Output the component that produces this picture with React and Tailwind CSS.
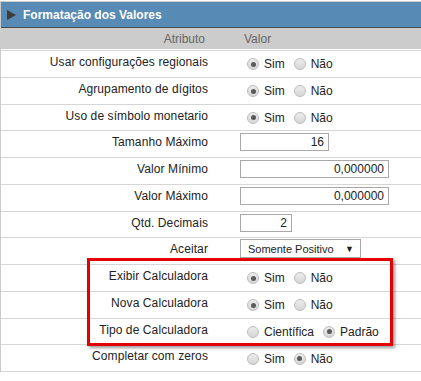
// App.jsx
// Formatação dos Valores – settings panel

const Radio = ({ checked }) => (
  <span className="inline-flex items-center justify-center w-[12px] h-[12px] rounded-full border border-[#bdbdbd] bg-[linear-gradient(#ececec,#d6d6d6)] shrink-0">
    {checked && <span className="w-[5px] h-[5px] rounded-full bg-[#5a5a5a]" />}
  </span>
);

const RadioGroup = ({ options, value }) => (
  <div className="flex items-center h-full pt-[1px]">
    {options.map((opt, i) => (
      <div key={opt} className={`flex items-center ${i === 0 ? 'ml-[7px]' : 'ml-[9px]'}`}>
        <Radio checked={opt === value} />
        <span className="ml-[5px] leading-[14px]">{opt}</span>
      </div>
    ))}
  </div>
);

const TextBox = ({ value, width }) => (
  <div className="pt-[2px]">
    <div
      className="h-[18px] border border-[#a9a9a9] bg-white flex items-center justify-end pr-[4px] leading-[14px]"
      style={{ width }}
    >
      {value}
    </div>
  </div>
);

const Select = () => (
  <div className="pt-[1px]">
    <div className="w-[121px] h-[19px] border border-[#a9a9a9] bg-white flex items-center justify-between pl-[7px] pr-[6px] text-[11px] leading-[14px]">
      <span>Somente Positivo</span>
      <span className="text-[9px]">▼</span>
    </div>
  </div>
);

const ROWS = [
  { label: 'Usar configurações regionais', el: <RadioGroup options={['Sim', 'Não']} value="Sim" /> },
  { label: 'Agrupamento de dígitos', el: <RadioGroup options={['Sim', 'Não']} value="Sim" /> },
  { label: 'Uso de símbolo monetario', el: <RadioGroup options={['Sim', 'Não']} value="Sim" /> },
  { label: 'Tamanho Máximo', el: <TextBox value="16" width={89} /> },
  { label: 'Valor Mínimo', el: <TextBox value="0,000000" width={149} /> },
  { label: 'Valor Máximo', el: <TextBox value="0,000000" width={149} /> },
  { label: 'Qtd. Decimais', el: <TextBox value="2" width={52} /> },
  { label: 'Aceitar', el: <Select /> },
  { label: 'Exibir Calculadora', el: <RadioGroup options={['Sim', 'Não']} value="Sim" /> },
  { label: 'Nova Calculadora', el: <RadioGroup options={['Sim', 'Não']} value="Sim" /> },
  { label: 'Tipo de Calculadora', el: <RadioGroup options={['Científica', 'Padrão']} value="Padrão" /> },
  { label: 'Completar com zeros', el: <RadioGroup options={['Sim', 'Não']} value="Não" /> },
];

export default function App() {
  return (
    <div className="relative w-[421px] h-[381px] bg-white pt-[1px] text-[12px] text-[#222] font-['Liberation_Sans',Arial,sans-serif]">
      <div className="border-t border-l border-[#cccccc]">
        <div className="h-[26px] bg-[#578ab5] border-b border-[#4a4a4a] flex items-center pl-[6px]">
          <svg width="9" height="10" viewBox="0 0 9 10">
            <path d="M0 0 L9 5 L0 10 Z" fill="#3d3d3d" />
          </svg>
          <span className="ml-[7px] text-white font-bold text-[12px] leading-[14px]">
            Formatação dos Valores
          </span>
        </div>

        <div className="h-[22px] bg-[#cccccc] border-b border-white flex items-center text-[#666]">
          <div className="w-[239px] pr-[35px] text-right">Atributo</div>
          <div className="pl-[4px]">Valor</div>
        </div>

        <div className="border-b border-[#d6d6d6]">
          {ROWS.map(r => (
            <div key={r.label} className="h-[26.75px] border-t border-[#d6d6d6] flex">
              <div className="w-[239px] pr-[32px] pt-[4px] text-right leading-[14px] tracking-[0.1px]">{r.label}</div>
              <div className="flex-1">{r.el}</div>
            </div>
          ))}
        </div>
      </div>

      <div className="absolute left-[87px] top-[258px] w-[306px] h-[88px] border-[3px] border-[#e30000] shadow-[2px_2px_3px_rgba(0,0,0,0.4)]" />
    </div>
  );
}
